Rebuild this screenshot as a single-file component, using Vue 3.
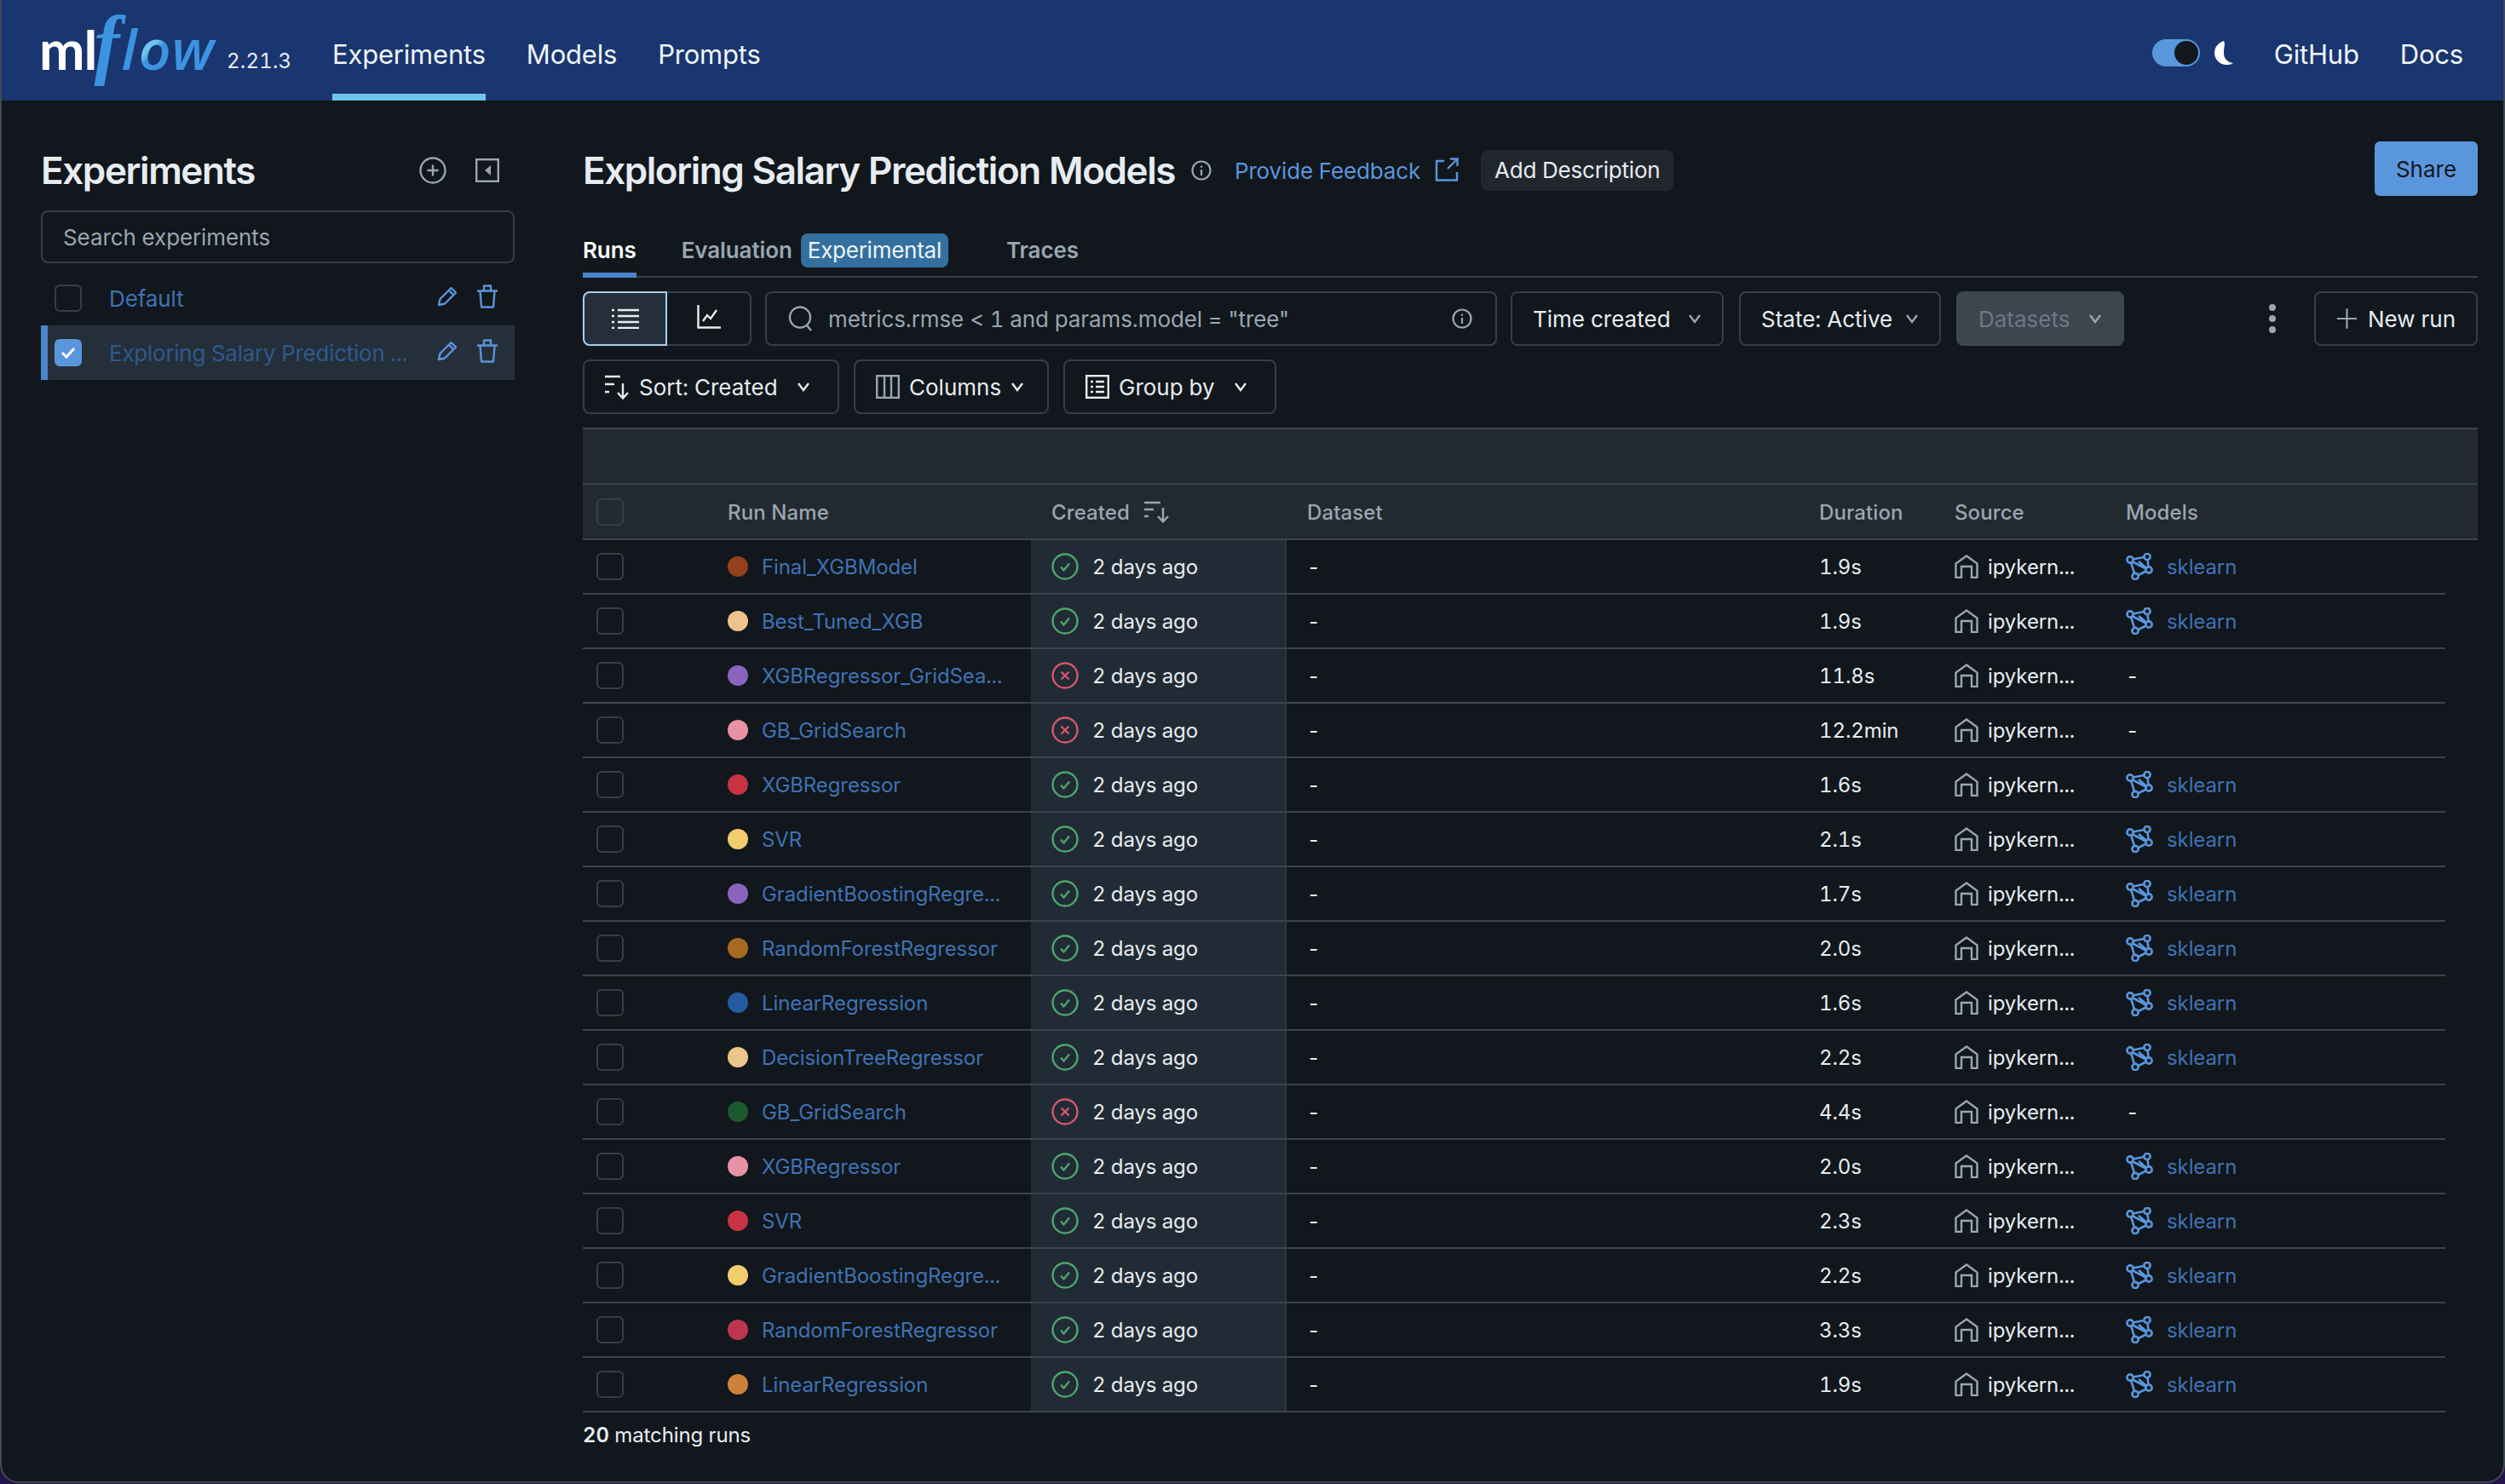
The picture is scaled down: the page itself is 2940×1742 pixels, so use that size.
<script setup>
const runs = [
  ['Final_XGBModel', '#93401c', 1, '1.9s', 1],
  ['Best_Tuned_XGB', '#edc48c', 1, '1.9s', 1],
  ['XGBRegressor_GridSea...', '#8a63bf', 0, '11.8s', 0],
  ['GB_GridSearch', '#e992a5', 0, '12.2min', 0],
  ['XGBRegressor', '#c83243', 1, '1.6s', 1],
  ['SVR', '#f2cd6d', 1, '2.1s', 1],
  ['GradientBoostingRegre...', '#8a63bf', 1, '1.7s', 1],
  ['RandomForestRegressor', '#a76a20', 1, '2.0s', 1],
  ['LinearRegression', '#2559a0', 1, '1.6s', 1],
  ['DecisionTreeRegressor', '#edc48c', 1, '2.2s', 1],
  ['GB_GridSearch', '#1c5a2e', 0, '4.4s', 0],
  ['XGBRegressor', '#e992a5', 1, '2.0s', 1],
  ['SVR', '#c83243', 1, '2.3s', 1],
  ['GradientBoostingRegre...', '#f2cd6d', 1, '2.2s', 1],
  ['RandomForestRegressor', '#bc3650', 1, '3.3s', 1],
  ['LinearRegression', '#ce8138', 1, '1.9s', 1],
].map(([name, color, ok, duration, model]) => ({ name, color, ok, duration, model }))
</script>

<template>
  <div class="window">
    <header class="topbar">
      <div class="logo">
        <span class="ml">ml</span><span class="f">f</span><span class="lw">l</span><span class="o">o</span><span class="lw">w</span>
      </div>
      <span class="version">2.21.3</span>
      <nav class="nav">
        <a class="nav-item active">Experiments</a>
        <a class="nav-item">Models</a>
        <a class="nav-item">Prompts</a>
      </nav>
      <div class="top-right">
        <div class="toggle"><span class="knob"></span></div>
        <svg class="moon" width="26" height="30" viewBox="0 0 26 30"><path d="M13 1C7 3 2 8 2 15s5 13 13 14c4 .4 7-.5 9-2-7-1-11-5-11-12S15 5 13 1z" fill="#fff"/></svg>
        <a class="nav-item github">GitHub</a>
        <a class="nav-item docs">Docs</a>
      </div>
    </header>

    <div class="layout">
      <aside class="sidebar">
        <div class="side-head">
          <h2 class="side-title">Experiments</h2>
          <svg class="side-plus" width="32" height="32" viewBox="0 0 32 32" fill="none" stroke="#9aa6b2" stroke-width="2.4"><circle cx="16" cy="16" r="14.5"/><path d="M16 9.5v13M9.5 16h13"/></svg>
          <svg class="side-collapse" width="28" height="28" viewBox="0 0 28 28"><rect x="1.2" y="1.2" width="25.6" height="25.6" fill="none" stroke="#9aa6b2" stroke-width="2.4"/><path d="M18 8v12l-7-6z" fill="#9aa6b2"/></svg>
        </div>
        <div class="side-search">Search experiments</div>
        <div class="exp-row">
          <span class="box"></span>
          <span class="exp-name">Default</span>
          <svg class="pencil" width="24" height="24" viewBox="0 0 24 24" fill="none" stroke="#5a96dc" stroke-width="2.4" stroke-linejoin="round"><path d="M2 22l1.5-7L16.5 2l5.5 5.500L9 20.500z"/><path d="M14 5l5 5"/></svg>
          <svg class="trash" width="26" height="28" viewBox="0 0 26 28" fill="none" stroke="#5a96dc" stroke-width="2.4" stroke-linejoin="round"><path d="M1 7.500h24M4.500 7.500l1.500 19h14l1.500-19M9 7V1.500h8V7"/></svg>
        </div>
        <div class="exp-row selected">
          <span class="box checked"><svg width="20" height="16" viewBox="0 0 20 16" fill="none" stroke="#fff" stroke-width="3"><path d="M3 8l5 5 9-10"/></svg></span>
          <span class="exp-name dim">Exploring Salary Prediction ...</span>
          <svg class="pencil" width="24" height="24" viewBox="0 0 24 24" fill="none" stroke="#5a96dc" stroke-width="2.4" stroke-linejoin="round"><path d="M2 22l1.5-7L16.5 2l5.5 5.500L9 20.500z"/><path d="M14 5l5 5"/></svg>
          <svg class="trash" width="26" height="28" viewBox="0 0 26 28" fill="none" stroke="#5a96dc" stroke-width="2.4" stroke-linejoin="round"><path d="M1 7.500h24M4.500 7.500l1.500 19h14l1.500-19M9 7V1.500h8V7"/></svg>
        </div>
      </aside>

      <main class="main">
        <div class="main-head">
          <h1 class="title">Exploring Salary Prediction Models</h1>
          <svg class="title-info" width="24" height="24" viewBox="0 0 24 24" fill="none" stroke="#9aa6b2" stroke-width="2.2"><circle cx="12" cy="12" r="10.500"/><path d="M12 11v7M12 6.500v2.200"/></svg>
          <a class="feedback">Provide Feedback</a>
          <svg class="ext" width="28" height="28" viewBox="0 0 28 28" fill="none" stroke="#5a96dc" stroke-width="2.400"><path d="M11 4H2v22.500h24V17M15 13L26 2M18 1.500h8.500V10"/></svg>
          <span class="add-desc">Add Description</span>
          <button class="share">Share</button>
        </div>

        <div class="tabs">
          <span class="tab on">Runs</span>
          <span class="tab eval">Evaluation<span class="pill">Experimental</span></span>
          <span class="tab traces">Traces</span>
        </div>

        <div class="toolbar">
          <div class="seg">
            <span class="seg-a">
              <svg width="32" height="24" viewBox="0 0 32 24" fill="none" stroke="#e8ecf1" stroke-width="2.400"><path d="M0 2h3M7 2h25M0 9h3M7 9h25M0 16h3M7 16h25M0 23h3M7 23h25"/></svg>
            </span>
            <span class="seg-b">
              <svg width="28" height="28" viewBox="0 0 28 28" fill="none" stroke="#e8ecf1" stroke-width="2.400"><path d="M1.500 0v26.500H28M7 19l5-7 4 4 7-10"/></svg>
            </span>
          </div>
          <div class="search">
            <svg width="31" height="30" viewBox="0 0 31 30" fill="none" stroke="#9aa6b2" stroke-width="2.400"><circle cx="14" cy="13.500" r="12"/><path d="M22 23l5 6"/></svg>
            <span class="search-text">metrics.rmse &lt; 1 and params.model = "tree"</span>
            <svg class="search-info" width="24" height="24" viewBox="0 0 24 24" fill="none" stroke="#9aa6b2" stroke-width="2.200"><circle cx="12" cy="12" r="10.500"/><path d="M12 11v7M12 6.500v2.200"/></svg>
          </div>
          <button class="btn w-time"><span>Time created</span><svg class="chev" width="16" height="12" viewBox="0 0 16 12" fill="none" stroke="#9aa6b2" stroke-width="2.400"><path d="M2 2l6 8 6-8"/></svg></button>
          <button class="btn w-state"><span>State: Active</span><svg class="chev" width="16" height="12" viewBox="0 0 16 12" fill="none" stroke="#9aa6b2" stroke-width="2.400"><path d="M2 2l6 8 6-8"/></svg></button>
          <button class="btn w-data"><span>Datasets</span><svg class="chev" width="16" height="12" viewBox="0 0 16 12" fill="none" stroke="#9aa6b2" stroke-width="2.400"><path d="M2 2l6 8 6-8"/></svg></button>
          <span class="dots"><i></i><i></i><i></i></span>
          <button class="btn w-new">
            <svg width="30" height="30" viewBox="0 0 30 30" fill="none" stroke="#9aa6b2" stroke-width="2.600"><path d="M15 1v28M1 15h28"/></svg>
            <span>New run</span>
          </button>
        </div>

        <div class="toolbar row2">
          <button class="btn w-sort">
            <svg width="30" height="30" viewBox="0 0 30 30" fill="none" stroke="#e8ecf1" stroke-width="2.400"><path d="M0 3h18M0 12h11M0 21h5M21 11v17M15 22l6 6.500 6-6.500"/></svg>
            <span>Sort: Created</span>
            <svg class="chev auto" width="16" height="12" viewBox="0 0 16 12" fill="none" stroke="#e8ecf1" stroke-width="2.400"><path d="M2 2l6 8 6-8"/></svg>
          </button>
          <button class="btn w-col">
            <svg width="28" height="28" viewBox="0 0 28 28" fill="none" stroke="#9aa6b2" stroke-width="2.400"><rect x="1.200" y="1.200" width="25.600" height="25.600"/><path d="M10 1v26M18 1v26"/></svg>
            <span>Columns</span>
            <svg class="chev" width="16" height="12" viewBox="0 0 16 12" fill="none" stroke="#e8ecf1" stroke-width="2.400"><path d="M2 2l6 8 6-8"/></svg>
          </button>
          <button class="btn w-group">
            <svg width="28" height="28" viewBox="0 0 28 28" fill="none" stroke="#e8ecf1" stroke-width="2.400"><rect x="1.200" y="1.200" width="25.600" height="25.600"/><path d="M6 8h3M12 8h10M6 14h3M12 14h10M6 20h3M12 20h10"/></svg>
            <span>Group by</span>
            <svg class="chev auto" width="16" height="12" viewBox="0 0 16 12" fill="none" stroke="#e8ecf1" stroke-width="2.400"><path d="M2 2l6 8 6-8"/></svg>
          </button>
        </div>

        <div class="table">
          <div class="band"></div>
          <div class="thead">
            <div class="c-check"><span class="box"></span></div>
            <div class="c-name">Run Name</div>
            <div class="c-created plain">
              Created
              <svg width="30" height="26" viewBox="0 0 30 26" fill="none" stroke="#9aa6b2" stroke-width="2.400"><path d="M0 2h19M0 10h11M0 18h5M22 8v16M16 18l6 6.500 6-6.500"/></svg>
            </div>
            <div class="c-dataset">Dataset</div>
            <div class="c-dur">Duration</div>
            <div class="c-src">Source</div>
            <div class="c-model">Models</div>
          </div>
          <div v-for="(r, i) in runs" :key="i" class="row">
            <div class="c-check"><span class="box"></span></div>
            <div class="c-name">
              <span class="dot" :style="{ background: r.color }"></span>
              <a class="link">{{ r.name }}</a>
            </div>
            <div class="c-created">
              <svg v-if="r.ok" width="32" height="32" viewBox="0 0 32 32" fill="none" stroke="#4fa56c" stroke-width="2.400"><circle cx="16" cy="16" r="14.500"/><path d="M11 16.500l3.500 4 6.500-8"/></svg>
              <svg v-else width="32" height="32" viewBox="0 0 32 32" fill="none" stroke="#d7566c" stroke-width="2.400"><circle cx="16" cy="16" r="14.500"/><path d="M11.500 11.500l9 9M20.500 11.500l-9 9"/></svg>
              <span>2 days ago</span>
            </div>
            <div class="c-dataset">-</div>
            <div class="c-dur">{{ r.duration }}</div>
            <div class="c-src">
              <svg width="28" height="28" viewBox="0 0 28 28" fill="none" stroke="#9aa6b2" stroke-width="2.400"><path d="M1.500 27V10.500L14 1.500l12.500 9V27H20V14H8v13z"/></svg>
              <span>ipykern...</span>
            </div>
            <div class="c-model">
              <template v-if="r.model">
                <svg width="32" height="32" viewBox="0 0 32 32" fill="none" stroke="#5a96dc" stroke-width="2.600"><circle cx="5" cy="8" r="3.600"/><circle cx="25" cy="4.500" r="3.600"/><circle cx="27" cy="20" r="3.600"/><circle cx="11" cy="27.500" r="3.600"/><path d="M8.500 7.500l13-2.500M25.500 8l1 8.500M23.700 21.500l-9 4.500M10 24L6 11M8 10.500l15.500 8M15 10l9.500 8"/></svg>
                <a class="link">sklearn</a>
              </template>
              <span v-else>-</span>
            </div>
          </div>
        </div>

        <div class="foot"><b>20</b> matching runs</div>
      </main>
    </div>
  </div>
</template>

<style>
html, body { margin: 0; background: #24134a; }
</style>

<style scoped>
* { box-sizing: border-box; }
.window {
  width: 2940px; height: 1741px; display: flex; flex-direction: column; overflow: hidden;
  background: #11171c; border: solid #414a53; border-width: 0 2px 2px; border-radius: 0 0 22px 22px;
  font-family: Inter, "Liberation Sans", sans-serif; font-size: 26px; color: #e8ecf1; letter-spacing: -.1px;
  font-variant-numeric: tabular-nums;
}
.topbar { flex: none; height: 118px; background: #193670; display: flex; align-items: flex-start; padding: 0 47px 0 44px; color: #fff; }
.logo { flex: none; width: 220px; height: 118px; padding-top: 16px; line-height: 72px; font-family: "Open Sans", sans-serif; font-weight: 700; font-size: 62px; white-space: nowrap; letter-spacing: 0; display: flex; align-items: baseline; }
.ml { color: #fff; font-family: Lato, sans-serif; font-size: 64px; letter-spacing: -1px; }
.f { font-family: "Liberation Serif", serif; font-style: italic; font-weight: 700; font-size: 90px; line-height: 72px; color: #3d93e0; margin: 0 2px 0 -3px; }
.lw { font-style: italic; font-weight: 600; color: #3d93e0; font-size: 66px; letter-spacing: 1px; }
.o { font-style: italic; font-weight: 600; font-size: 66px; margin: 0 1px; background: linear-gradient(135deg, #6ec6ee 45%, #3d93e0 55%); -webkit-background-clip: text; background-clip: text; color: transparent; }
.version { flex: none; font-size: 24px; letter-spacing: .2px; line-height: 28px; margin-top: 58px; color: #e8ecf1; width: 124px; }
.nav { display: flex; gap: 48px; flex: 1; }
.nav-item { font-size: 31px; letter-spacing: -.2px; padding-top: 41px; line-height: 46px; height: 118px; color: #f2f5f8; display: block; white-space: nowrap; }
.nav-item.active { border-bottom: 8px solid #6ec6ee; }
.top-right { display: flex; align-items: flex-start; }
.toggle { width: 56px; height: 32px; border-radius: 16px; background: #5a96dc; margin-top: 46px; display: flex; align-items: center; justify-content: flex-end; padding-right: 2px; }
.knob { width: 28px; height: 28px; border-radius: 50%; background: #11171c; }
.moon { margin: 47px 46px 0 15px; }
.docs { margin-left: 48px; }
.layout { flex: 1; display: flex; padding: 48px 30px 0 46px; gap: 80px; min-height: 0; }
.sidebar { flex: none; width: 556px; padding-top: 10px; }
.side-head { display: flex; align-items: center; height: 48px; }
.side-title { margin: 0; font-size: 44px; font-weight: 600; line-height: 48px; flex: 1; letter-spacing: -1.4px; }
.side-plus { margin-right: 34px; }
.side-collapse { margin-right: 18px; }
.side-search { margin-top: 23px; height: 62px; border: 2px solid #353e47; border-radius: 8px; padding: 0 24px; line-height: 60px; color: #9aa6b2; }
.exp-row { height: 64px; display: flex; align-items: center; padding-left: 16px; }
.side-search + .exp-row { margin-top: 9px; }
.exp-row.selected { background: #252f3a; border-left: 8px solid #4a85cc; padding-left: 8px; }
.box { display: inline-flex; align-items: center; justify-content: center; flex: none; width: 32px; height: 32px; border: 2px solid #353e47; border-radius: 6px; }
.box.checked { background: #5a96dc; border-color: #5a96dc; }
.exp-name { flex: 1; margin-left: 32px; color: #3f72b4; white-space: nowrap; overflow: hidden; }
.exp-name.dim { color: #2d5a8c; letter-spacing: -.25px; }
.pencil { margin-right: 22px; margin-top: -4px; }
.trash { margin-right: 19px; margin-top: -4px; }
.main { flex: 1; min-width: 0; }
.main-head { display: flex; align-items: center; height: 64px; }
.title { margin: 4px 0 0; font-size: 44px; font-weight: 600; line-height: 56px; white-space: nowrap; letter-spacing: -1.45px; }
.title-info { margin: 4px 0 0 19px; flex: none; }
.feedback { margin: 4px 0 0 27px; color: #5a96dc; white-space: nowrap; letter-spacing: -.15px; }
.ext { margin: 2px 0 0 17px; flex: none; }
.add-desc { margin: 4px 0 0 26px; height: 48px; line-height: 48px; background: #22272e; border-radius: 8px; padding: 0 16px; white-space: nowrap; letter-spacing: -.2px; }
.share { margin-left: auto; width: 121px; height: 64px; border: 0; border-radius: 6px; background: #5a96dc; color: #11171c; font: inherit; padding: 0; }
.tabs { margin-top: 44px; height: 52px; display: flex; border-bottom: 2px solid #3b444d; font-weight: 600; color: #9aa6b2; }
.tab { height: 52px; line-height: 40px; padding-bottom: 6px; white-space: nowrap; display: flex; }
.tab.on { color: #fff; border-bottom: 6px solid #4a85cc; }
.eval { margin-left: 53px; }
.pill { display: block; height: 40px; line-height: 40px; padding: 0 8px; margin-left: 10px; background: #33709f; color: #eef3f7; border-radius: 8px; font-weight: 400; letter-spacing: -.25px; }
.traces { margin-left: 68px; }
.toolbar { display: flex; margin-top: 16px; height: 64px; gap: 16px; align-items: stretch; }
.seg { display: flex; width: 198px; flex: none; }
.seg-a { width: 99px; background: #252f3a; border: 2px solid #a8cdf0; border-radius: 8px 0 0 8px; display: flex; align-items: center; justify-content: center; }
.seg-b { flex: 1; border: 2px solid #353e47; border-left: 0; border-radius: 0 8px 8px 0; display: flex; align-items: center; justify-content: center; padding-bottom: 4px; }
.search { width: 859px; flex: none; border: 2px solid #353e47; border-radius: 8px; display: flex; align-items: center; padding-left: 25px; color: #9aa6b2; }
.search-text { margin-left: 16px; flex: 1; }
.search-info { margin-right: 27px; }
.btn { flex: none; display: flex; align-items: center; background: transparent; border: 2px solid #353e47; border-radius: 8px; color: #e8ecf1; font: inherit; padding: 0 24px; white-space: nowrap; justify-content: space-between; }
.w-time { width: 250px; }
.w-state { width: 237px; margin-left: 2px; }
.w-data { width: 197px; margin-left: 2px; background: #3c464f; border-color: #3c464f; color: #6c7885; }
.dots { flex: none; margin-left: 154px; width: 8px; display: flex; flex-direction: column; justify-content: center; gap: 5px; }
.dots i { display: block; width: 8px; height: 8px; border-radius: 50%; background: #9aa6b2; }
.w-new { width: 192px; justify-content: flex-start; gap: 12px; margin-left: auto; }
.w-sort { width: 301px; gap: 10px; justify-content: flex-start; }
.w-sort .auto, .w-group .auto { margin-left: auto; margin-right: 8px; }
.w-col { width: 229px; gap: 11px; justify-content: flex-start; margin-left: 1px; }
.w-group { width: 250px; gap: 11px; justify-content: flex-start; margin-left: 1px; }
.table { margin-top: 16px; font-size: 24px; }
.band { height: 67px; background: #222930; border: solid #3b444d; border-width: 2px 0; }
.thead, .row { display: grid; grid-template-columns: 170px 356px 300px 625px 159px 201px 375px; align-items: stretch; }
.thead { height: 65px; padding-top: 1px; background: #222930; border-bottom: 2px solid #3b444d; color: #9aa6b2; font-weight: 500; grid-template-columns: 170px 356px 300px 625px 159px 201px 413px; letter-spacing: .1px; }
.row { height: 64px; width: 2186px; border-bottom: 2px solid #3b444d; }
.thead > div, .row > div { display: flex; align-items: center; white-space: nowrap; }
.c-check { padding-left: 16px; }
.c-name { gap: 16px; }
.dot { flex: none; width: 24px; height: 24px; border-radius: 50%; }
.link { color: #3f72b4; }
.c-created { padding-left: 24px; gap: 16px; }
.row .c-created { background: #212b35; border-right: 2px solid #2c3742; }
.thead .c-created { gap: 17px; }
.c-dataset { padding-left: 24px; }
.c-src { gap: 11px; }
.c-model { gap: 16px; }
.foot { margin-top: 7px; line-height: 40px; color: #e8ecf1; font-size: 24px; }
.foot b { font-weight: 600; }
</style>
